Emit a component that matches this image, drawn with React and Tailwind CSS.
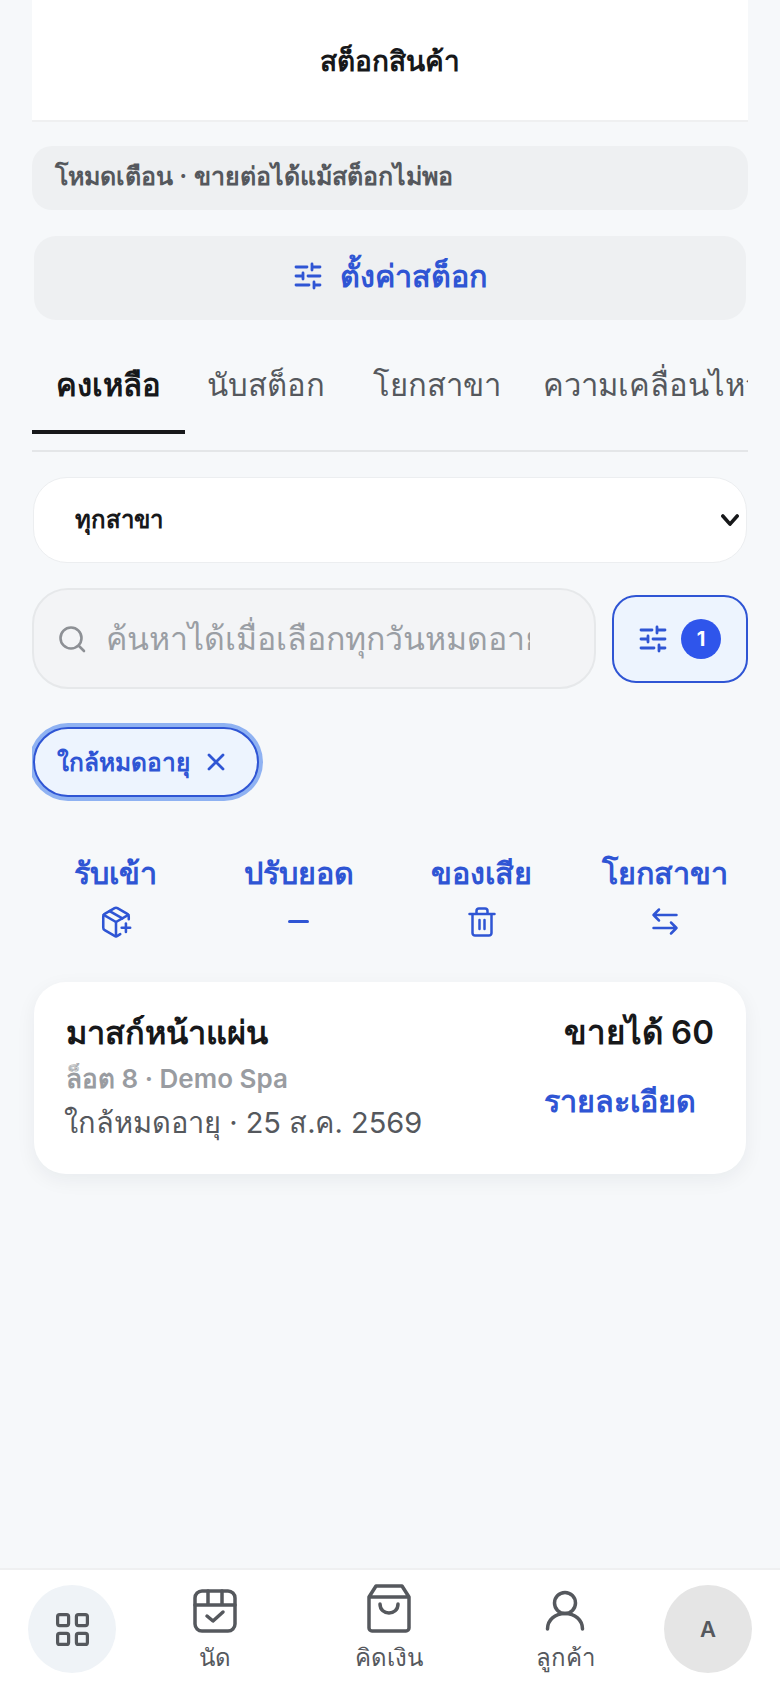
import { PackagePlus } from 'lucide-react'

const sans = 'font-["Inter","Noto_Sans","Noto_Sans_CJK_SC",sans-serif]'

const Sliders = () => (
  <svg viewBox="0 0 28 28" fill="none" stroke="currentColor" strokeWidth="2.8" strokeLinecap="round" className="w-[28px] h-[28px] shrink-0">
    <path d="M2 5h11M18 2v6M18 5h8M2 14h7M9 11v6M14 14h12M2 23h13M20 20v6M20 23h6" />
  </svg>
)

const Arrows = () => (
  <svg viewBox="0 0 30 30" fill="none" stroke="currentColor" strokeWidth="2.5" strokeLinecap="round" strokeLinejoin="round" className="w-[30px] h-[30px]">
    <path d="M9 2.500L3.500 8l5.500 5.500M3.500 8h23M21 15.500l5.500 5.500-5.500 5.500M26.500 21h-23" />
  </svg>
)

const Trash = () => (
  <svg viewBox="0 0 30 30" fill="none" stroke="currentColor" strokeWidth="2.5" strokeLinecap="round" strokeLinejoin="round" className="w-[30px] h-[30px]">
    <path d="M2.500 7h25M9.500 7V4a2.500 2.500 0 0 1 2.500-2.500h6A2.500 2.500 0 0 1 20.500 4v3M5.500 7v19a2.500 2.500 0 0 0 2.500 2.500h14a2.500 2.500 0 0 0 2.500-2.500V7M12.500 13v9M17.500 13v9" />
  </svg>
)

const actions = [
  { label: 'รับเข้า', icon: <PackagePlus size={34} strokeWidth={1.8} className="-my-[2px]" /> },
  { label: 'ปรับยอด', icon: <div className="w-[21px] h-[3px] bg-[#2f55d4] rounded my-[13px]" /> },
  { label: 'ของเสีย', icon: <Trash /> },
  { label: 'โยกสาขา', icon: <Arrows /> },
]

export default function App() {
  return (
    <div className={`${sans} w-[780px] h-[1688px] bg-[#f6f8fa] flex flex-col overflow-hidden`}>
      <div className="flex-1 px-[32px]">
        <div className="h-[122px] pt-[2px] bg-white border-b-2 border-[#eff0f1] flex items-center justify-center text-[28px] font-semibold text-[#17181a]">
          สต็อกสินค้า
        </div>

        <div className="mt-[24px] h-[64px] rounded-[20px] bg-[#eef0f2] flex items-center px-[23px] pb-[2px] text-[25px] font-semibold text-[#55585d]">
          โหมดเตือน · ขายต่อได้แม้สต็อกไม่พอ
        </div>

        <button className="mt-[26px] mx-[2px] w-[712px] h-[84px] pb-[4px] rounded-[22px] bg-[#eef0f2] flex items-center justify-center gap-[18px] text-[30.500px] font-semibold text-[#2f55d4]">
          <Sliders />
          ตั้งค่าสต็อก
        </button>

        <div className="mt-[30px] h-[102px] border-b-2 border-[#e4e6e8] flex items-start overflow-hidden text-[31px] font-medium text-[#55585d] whitespace-nowrap">
          <div className="w-[153px] h-[84px] pb-[10px] shrink-0 border-b-[4px] border-[#17181a] flex items-center justify-center font-semibold text-[#17181a]">คงเหลือ</div>
          <div className="w-[166px] h-[84px] pb-[14px] pl-[22px] shrink-0 flex items-center">นับสต็อก</div>
          <div className="w-[170px] h-[84px] pb-[14px] pl-[22px] shrink-0 flex items-center">โยกสาขา</div>
          <div className="h-[84px] pb-[14px] pl-[22px] shrink-0 flex items-center">ความเคลื่อนไหว</div>
        </div>

        <div className="mt-[25px] mx-[1px] h-[86px] rounded-[34px] bg-white border border-[#eceef0] flex items-center justify-between pl-[41px] pr-[7px] text-[24px] font-semibold text-[#17181a]">
          ทุกสาขา
          <svg viewBox="0 0 20 14" fill="none" stroke="currentColor" strokeWidth="4" strokeLinecap="round" strokeLinejoin="round" className="w-[18px] h-[13px]">
            <path d="M2 2l8 9 8-9" />
          </svg>
        </div>

        <div className="mt-[25px] flex items-center gap-[16px]">
          <div className="w-[564px] h-[101px] rounded-[36px] bg-[#f3f4f6] border-2 border-[#e6e8ea] flex items-center pl-[24px] pr-[64px] text-[#9a9ea4] shrink-0">
            <svg viewBox="0 0 28 28" fill="none" stroke="currentColor" strokeWidth="2.6" strokeLinecap="round" className="w-[28px] h-[28px] shrink-0 text-[#8d9095]">
              <circle cx="13" cy="13" r="10.500" />
              <path d="M21 21l5 5" />
            </svg>
            <div className="ml-[20px] text-[32px] overflow-hidden whitespace-nowrap">ค้นหาได้เมื่อเลือกทุกวันหมดอายุ</div>
          </div>
          <div className="w-[136px] h-[88px] rounded-[24px] bg-[#edf4fe] border-2 border-[#2f55d4] flex items-center justify-center gap-[14px] text-[#2f55d4]">
            <Sliders />
            <div className="w-[40px] h-[40px] rounded-full bg-[#2f55eb] text-white flex items-center justify-center text-[20px] font-bold">1</div>
          </div>
        </div>

        <div className="mt-[33px] py-[5px] overflow-hidden">
          <div className="ml-[1px] w-[226px] h-[70px] rounded-full bg-[#edf4fe] border-2 border-[#2f55d4] shadow-[0_0_0_4px_#8fb2f2] flex items-center pl-[22px] gap-[16px] text-[24.500px] font-semibold text-[#2f55d4]">
            ใกล้หมดอายุ
            <svg viewBox="0 0 20 20" fill="none" stroke="currentColor" strokeWidth="2.8" strokeLinecap="round" className="w-[20px] h-[20px]">
              <path d="M3 3l14 14M17 3L3 17" />
            </svg>
          </div>
        </div>

        <div className="mt-[48px] -mx-[8px] grid grid-cols-4 text-[30.500px] font-semibold text-[#2f55d4]">
          {actions.map((a) => (
            <div key={a.label} className="flex flex-col items-center gap-[12px]">
              <span className="leading-[45px]">{a.label}</span>
              {a.icon}
            </div>
          ))}
        </div>

        <div className="mt-[45px] mx-[2px] h-[192px] rounded-[32px] bg-white shadow-[0_6px_20px_rgba(20,30,50,0.06)] flex justify-between pl-[32px] pr-[32px] pt-[26px]">
          <div className="flex flex-col">
            <div className="text-[32.500px] leading-[50px] font-semibold text-[#17181a]">มาสก์หน้าแผ่น</div>
            <div className="mt-[3px] text-[26px] leading-[36px] font-semibold text-[#999ca1]">ล็อต 8 · Demo Spa</div>
            <div className="mt-[4px] -ml-[2px] text-[29px] leading-[44px] text-[#55585d]">ใกล้หมดอายุ · 25 ส.ค. 2569</div>
          </div>
          <div className="flex flex-col items-end">
            <div className="text-[33px] leading-[48px] font-semibold text-[#17181a]">ขายได้ 60</div>
            <div className="mt-[22px] mr-[18px] text-[30.500px] leading-[45px] font-semibold text-[#2f55d4]">รายละเอียด</div>
          </div>
        </div>
      </div>

      <div className="h-[120px] bg-white border-t-2 border-[#eff0f1] flex items-center pl-[28px] pr-[28px] text-[#55585d] shrink-0">
        <div className="w-[88px] h-[88px] rounded-full bg-[#eff3f7] flex items-center justify-center shrink-0">
          <svg viewBox="0 0 33 33" fill="none" stroke="currentColor" strokeWidth="3.2" strokeLinejoin="round" className="w-[33px] h-[33px]">
            <rect x="1.600" y="1.600" width="11" height="11" rx="2" />
            <rect x="20.400" y="1.600" width="11" height="11" rx="2" />
            <rect x="1.600" y="20.400" width="11" height="11" rx="2" />
            <rect x="20.400" y="20.400" width="11" height="11" rx="2" />
          </svg>
        </div>

        <div className="ml-[64px] w-[70px] h-[100px] pt-[5px] flex flex-col items-center">
          <svg viewBox="0 0 44 44" fill="none" stroke="currentColor" strokeWidth="3.5" strokeLinecap="round" strokeLinejoin="round" className="w-[44px] h-[44px] mt-[5px]">
            <rect x="2" y="2" width="40" height="40" rx="7" />
            <path d="M2 16h40M15 2v14M29 2v14M14 27l6 5 10-9" />
          </svg>
          <span className="mt-[7px] text-[24px] leading-[36px] font-medium">นัด</span>
        </div>

        <div className="ml-[89px] w-[100px] h-[100px] pt-[5px] flex flex-col items-center">
          <svg viewBox="0 0 44 49" fill="none" stroke="currentColor" strokeWidth="3.5" strokeLinecap="round" strokeLinejoin="round" className="w-[44px] h-[49px]">
            <path d="M9 2h26l7 11v31a3 3 0 0 1-3 3H5a3 3 0 0 1-3-3V13zM2 13h40M13 20c0 12 18 12 18 0" />
          </svg>
          <span className="mt-[7px] text-[24px] leading-[36px] font-medium">คิดเงิน</span>
        </div>

        <div className="ml-[91px] w-[70px] h-[100px] pt-[5px] flex flex-col items-center">
          <svg viewBox="0 0 40 42" fill="none" stroke="currentColor" strokeWidth="3.5" strokeLinecap="round" className="w-[40px] h-[42px] mt-[6px]">
            <circle cx="20" cy="13" r="10.500" />
            <path d="M2.500 39C2.500 30 10 23.500 20 23.500S37.500 30 37.500 39" />
          </svg>
          <span className="mt-[8px] text-[24px] leading-[36px] font-medium">ลูกค้า</span>
        </div>

        <div className="ml-auto w-[88px] h-[88px] rounded-full bg-[#e5e5e5] flex items-center justify-center text-[22px] font-semibold shrink-0">A</div>
      </div>
    </div>
  )
}
